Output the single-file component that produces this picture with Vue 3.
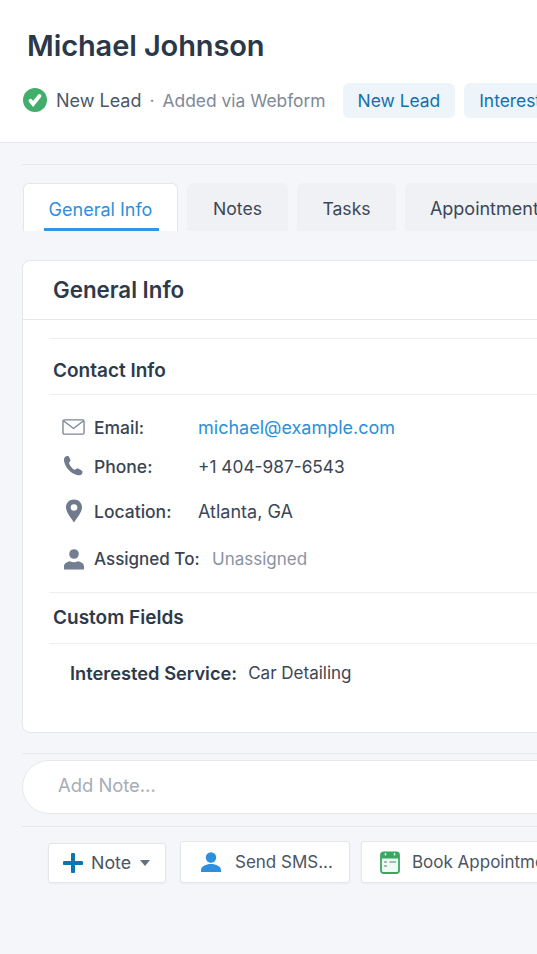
<script setup>
const contacts = [
  { key: 'email', label: 'Email:', value: 'michael@example.com' },
  { key: 'phone', label: 'Phone:', value: '+1 404-987-6543' },
  { key: 'location', label: 'Location:', value: 'Atlanta, GA' },
  { key: 'assigned', label: 'Assigned To:', value: 'Unassigned' },
];
const tabs = ['General Info', 'Notes', 'Tasks', 'Appointments'];
</script>

<template>
  <div class="page">
    <header class="head">
      <h1>Michael Johnson</h1>
      <div class="status">
        <svg class="check" width="24" height="24" viewBox="0 0 24 24">
          <circle cx="12" cy="12" r="12" fill="#43ad6c" />
          <path d="M7.500 12.800l2.600 3.200L16.500 8" fill="none" stroke="#fff" stroke-width="3.800" stroke-linecap="round" />
        </svg>
        <span class="lead">New Lead</span>
        <span class="dot">·</span>
        <span class="via">Added via Webform</span>
        <span class="tag first">New Lead</span>
        <span class="tag">Interested</span>
      </div>
    </header>

    <div class="rule top"></div>

    <nav class="tabs">
      <div v-for="(t, i) in tabs" :key="t" class="tab" :class="{ active: i === 0 }">
        <span>{{ t }}</span>
      </div>
    </nav>

    <section class="card">
      <h2>General Info</h2>
      <div class="body">
        <h3 class="contact-title">Contact Info</h3>
        <div v-for="c in contacts" :key="c.key" class="row" :class="c.key">
          <span class="ico">
            <svg v-if="c.key === 'email'" width="24" height="18" viewBox="0 0 24 18" fill="none" stroke="#7b8594" stroke-width="1.400">
              <rect x="1" y="1.500" width="22" height="15" rx="1.500" />
              <path d="M1.500 2.500L12 10.500 22.500 2.500" />
            </svg>
            <svg v-else-if="c.key === 'phone'" width="22" height="22" viewBox="0 0 22 22" fill="#6f7b8c">
              <path d="M2.200 1.800C3.400.800 5 .600 5.800 1.400l1.500 3.200c.3.700.2 1.400-.3 1.900L5.900 7.700c.8 2.900 3.300 6 5.900 7.300l1.500-1.200c.6-.5 1.300-.5 1.900-.2l3.400 1.900c1 .6 1.200 1.800.6 2.900-.8 1.500-2.500 2.200-4.400 1.800C8.400 18.900 3 13.200 1.300 7.200.6 5 1 3 2.200 1.800z" />
            </svg>
            <svg v-else-if="c.key === 'location'" width="18" height="24" viewBox="0 0 18 24">
              <path fill="#6f7b8c" fill-rule="evenodd" d="M9 .500C4.200.500 1 4 1 8.300 1 13.500 6.500 19.500 9 23.500c2.500-4 8-10 8-15.200C17 4 13.800.500 9 .500zM9 5.200a3.300 3.300 0 1 1 0 6.600 3.300 3.300 0 0 1 0-6.600z" />
            </svg>
            <svg v-else width="22" height="22" viewBox="0 0 22 22" fill="#737f90">
              <circle cx="11" cy="6" r="4.800" />
              <path d="M1 21.500v-3c0-3 2.500-4.500 6-5.200 2.500 1.200 5.500 1.200 8 0 3.500.7 6 2.200 6 5.200v3z" />
            </svg>
          </span>
          <span class="label">{{ c.label }}</span>
          <span class="value">{{ c.value }}</span>
        </div>

        <h3 class="custom-title">Custom Fields</h3>
        <div class="service">
          <b>Interested Service:</b>
          <span>Car Detailing</span>
        </div>
      </div>
    </section>

    <div class="rule note-top"></div>
    <div class="note">Add Note...</div>
    <div class="rule note-bot"></div>

    <div class="actions">
      <div class="btn btn-note">
        <svg width="20" height="20" viewBox="0 0 20 20"><path d="M10 1.500v17M1.500 10h17" stroke="#0b76b4" stroke-width="4" stroke-linecap="round" /></svg>
        <span>Note</span>
        <i class="caret"></i>
      </div>
      <div class="btn btn-sms">
        <svg width="22" height="22" viewBox="0 0 22 22" fill="#2e8fdd">
          <circle cx="11" cy="6.500" r="5.200" />
          <path d="M1 21v-2c0-3.500 5-6 10-6s10 2.500 10 6v2z" />
        </svg>
        <span>Send SMS...</span>
      </div>
      <div class="btn btn-book">
        <svg width="20" height="24" viewBox="0 0 20 24" fill="none">
          <rect x="1" y="2.500" width="18" height="20.500" rx="2.500" fill="#eefaf2" stroke="#37a862" stroke-width="1.800" />
          <path d="M1 4.500a2 2 0 0 1 2-2h14a2 2 0 0 1 2 2V8.500H1z" fill="#37a862" />
          <path d="M5.500 3v2.500M14.500 3v2.500" stroke="#d8f2e2" stroke-width="1.500" />
          <path d="M4 12h3M9.500 12h6.500M4 16h3" stroke="#87a79a" stroke-width="1.500" />
        </svg>
        <span>Book Appointment</span>
      </div>
    </div>
  </div>
</template>

<style>
body {
  background: #f4f6fa;
}
</style>

<style scoped>
.page {
  width: 537px;
  height: 954px;
  overflow: hidden;
  background: #f4f6fa;
  font-family: Inter, "Liberation Sans", sans-serif;
  color: #2d3a4b;
}

.head {
  height: 142px;
  background: #fff;
  border-bottom: 1px solid #e3e6ea;
  overflow: hidden;
}

h1 {
  margin: 28px 0 0 27px;
  font-size: 29px;
  line-height: 36px;
  font-weight: 600;
  letter-spacing: -0.1px;
  color: #2a3849;
}

.status {
  display: flex;
  align-items: center;
  margin: 18px 0 0 23px;
  height: 36px;
  white-space: nowrap;
  font-size: 17.400px;
}

.check {
  flex: none;
  margin-right: 9px;
}

.lead {
  font-size: 18px;
  color: #4c5766;
}

.dot {
  margin: 0 8px;
  color: #7d8896;
}

.via {
  color: #7f8997;
}

.tag {
  flex: none;
  height: 35px;
  line-height: 35px;
  padding: 0 15px;
  margin-left: 9px;
  background: #edf4fa;
  border-radius: 6px;
  color: #1470ad;
}

.tag.first {
  margin-left: 17px;
}

.rule {
  height: 1px;
  margin-left: 22px;
  background: #e4e7ec;
}

.rule.top {
  margin-top: 21px;
}

.tabs {
  display: flex;
  gap: 9px;
  margin: 18px 0 0 23px;
  height: 48px;
  white-space: nowrap;
  font-size: 17.600px;
}

.tab {
  flex: none;
  width: 101px;
  box-sizing: border-box;
  padding-top: 3px;
  display: flex;
  align-items: center;
  justify-content: center;
  background: #eff1f4;
  border-radius: 6px 6px 0 0;
  color: #3c4757;
}

.tab:nth-child(3) {
  width: 99px;
}

.tab:nth-child(4) {
  width: 168px;
  font-size: 18px;
}

.tab.active {
  width: 155px;
  font-size: 18px;
  background: #fff;
  border: 1px solid #e3e6ea;
  border-bottom: 0;
  color: #2f8fdc;
  background-image: linear-gradient(#2f97e6, #2f97e6);
  background-repeat: no-repeat;
  background-size: 115px 3px;
  background-position: 20px 100%;
}

.card {
  margin: 29px -8px 0 22px;
  height: 473px;
  box-sizing: border-box;
  background: #fff;
  border: 1px solid #e4e7eb;
  border-radius: 8px;
  overflow: hidden;
}

h2 {
  margin: 0;
  height: 58px;
  line-height: 58px;
  padding-left: 30px;
  font-size: 22.300px;
  font-weight: 600;
  border-bottom: 1px solid #e6e8ec;
  color: #2d3a4b;
}

.body {
  padding-left: 26px;
}

h3 {
  margin: 0;
  font-size: 19px;
  font-weight: 600;
  color: #2d3a4b;
  border-top: 1px solid #eceef1;
  border-bottom: 1px solid #eceef1;
  padding-left: 4px;
}

.contact-title {
  margin-top: 18px;
  height: 55px;
  line-height: 63px;
}

.row {
  display: flex;
  align-items: center;
  height: 30px;
  padding-left: 12px;
  font-size: 17.500px;
  white-space: nowrap;
}

.row.email {
  margin-top: 17px;
}

.row.phone {
  margin-top: 9px;
}

.row.location {
  margin-top: 15px;
}

.row.assigned {
  margin-top: 18px;
}

.ico {
  flex: none;
  width: 33px;
  display: flex;
  justify-content: center;
  padding-right: 9px;
  padding-left: 1px;
  box-sizing: border-box;
}

.label {
  width: 104px;
  flex: none;
  color: #3a4554;
  font-weight: 500;
}

.assigned .label {
  width: 118px;
  font-size: 17px;
}

.value {
  color: #3b4656;
}

.email .value {
  font-size: 18px;
  color: #2d8fd6;
}

.location .value {
  font-size: 18px;
}

.phone .value {
  font-size: 17.300px;
}

.assigned .value {
  font-size: 17px;
  color: #8a93a1;
}

.custom-title {
  margin-top: 18px;
  height: 50px;
  line-height: 49px;
}

.service {
  display: flex;
  gap: 11px;
  margin: 14px 0 0 21px;
  height: 30px;
  align-items: center;
  font-size: 17px;
  white-space: nowrap;
  color: #3b4656;
}

.service b {
  font-size: 18.300px;
  font-weight: 600;
  color: #2d3a4b;
}

.rule.note-top {
  margin-top: 20px;
  background: #e6e8ec;
}

.note {
  margin: 6px -40px 0 22px;
  height: 54px;
  box-sizing: border-box;
  padding-left: 35px;
  line-height: 49px;
  font-size: 18.400px;
  color: #a6adb8;
  background: #fff;
  border: 1px solid #e6e8ec;
  border-radius: 27px;
}

.rule.note-bot {
  margin-top: 12px;
}

.actions {
  display: flex;
  align-items: flex-end;
  margin: 13px 0 0 48px;
  height: 43px;
  white-space: nowrap;
  font-size: 17px;
  color: #4b5563;
}

.btn {
  flex: none;
  display: flex;
  align-items: center;
  box-sizing: border-box;
  background: #fff;
  border: 1px solid #e3e6ea;
  border-radius: 3px;
  box-shadow: 0 1px 2px rgba(40, 50, 70, 0.05);
}

.btn-note {
  width: 118px;
  height: 40px;
  padding: 0 0 2px 14px;
  gap: 8px;
  font-size: 17.800px;
}

.btn-note svg {
  margin-top: 2px;
}

.btn-note .caret {
  margin-left: 1px;
  margin-top: 2px;
}

.btn-sms {
  width: 170px;
  height: 42px;
  margin-left: 14px;
  padding-left: 19px;
  gap: 13px;
}

.btn-book {
  width: 240px;
  height: 42px;
  margin-left: 11px;
  padding-left: 18px;
  gap: 12px;
}

.caret {
  width: 0;
  height: 0;
  border: 5px solid transparent;
  border-top: 6px solid #666f7c;
  border-bottom: 0;
}
</style>
